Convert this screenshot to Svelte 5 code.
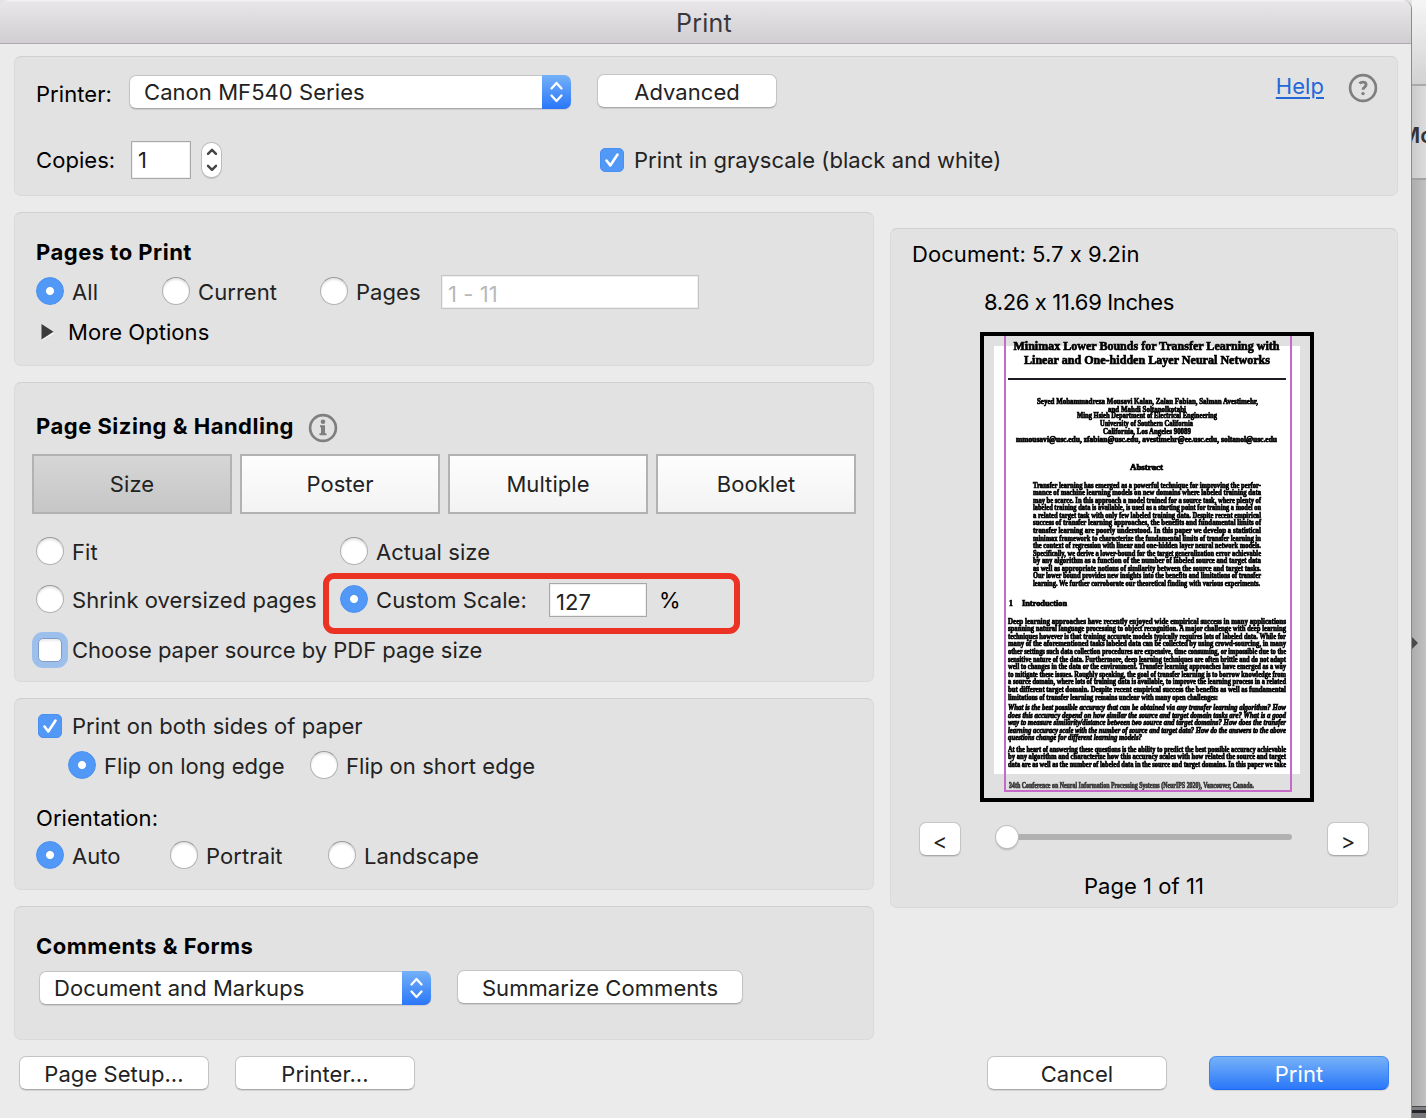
<script>
  let grayscale = $state(true);
  let range = $state('all');
  let scaling = $state('custom');
  let bySize = $state(false);
  let duplex = $state(true);
  let flip = $state('long');
  let orientation = $state('auto');
  let tab = $state('Size');

  const tabs = ['Size', 'Poster', 'Multiple', 'Booklet'];

  // thumbnail lines: x, baseline, width, font size, text
  const title = [
    [29.5, 13.8, 266, 13, 'Minimax Lower Bounds for Transfer Learning with'],
    [40, 27.8, 246, 13, 'Linear and One-hidden Layer Neural Networks']
  ];
  const authors = [
    [53, 67.7, 221, 7.5, 'Seyed Mohammadreza Mousavi Kalan, Zalan Fabian, Salman Avestimehr,'],
    [124, 75.7, 78, 7.5, 'and Mahdi Soltanolkotabi'],
    [93, 82, 140, 7.5, 'Ming Hsieh Department of Electrical Engineering'],
    [116, 89.8, 93, 7.5, 'University of Southern California'],
    [119, 97.8, 88, 7.5, 'California, Los Angeles 90089'],
    [32, 105.5, 261, 7.5, 'mmousavi@usc.edu, zfabian@usc.edu, avestimehr@ee.usc.edu, soltanol@usc.edu'],
    [146, 133.7, 33, 7.5, 'Abstract']
  ];
  const abstract = [
    'Transfer learning has emerged as a powerful technique for improving the perfor-',
    'mance of machine learning models on new domains where labeled training data',
    'may be scarce. In this approach a model trained for a source task, where plenty of',
    'labeled training data is available, is used as a starting point for training a model on',
    'a related target task with only few labeled training data. Despite recent empirical',
    'success of transfer learning approaches, the benefits and fundamental limits of',
    'transfer learning are poorly understood. In this paper we develop a statistical',
    'minimax framework to characterize the fundamental limits of transfer learning in',
    'the context of regression with linear and one-hidden layer neural network models.',
    'Specifically, we derive a lower-bound for the target generalization error achievable',
    'by any algorithm as a function of the number of labeled source and target data',
    'as well as appropriate notions of similarity between the source and target tasks.',
    'Our lower bound provides new insights into the benefits and limitations of transfer',
    'learning. We further corroborate our theoretical finding with various experiments.'
  ];
  const intro = [
    'Deep learning approaches have recently enjoyed wide empirical success in many applications',
    'spanning natural language processing to object recognition. A major challenge with deep learning',
    'techniques however is that training accurate models typically requires lots of labeled data. While for',
    'many of the aforementioned tasks labeled data can be collected by using crowd-sourcing, in many',
    'other settings such data collection procedures are expensive, time consuming, or impossible due to the',
    'sensitive nature of the data. Furthermore, deep learning techniques are often brittle and do not adapt',
    'well to changes in the data or the environment. Transfer learning approaches have emerged as a way',
    'to mitigate these issues. Roughly speaking, the goal of transfer learning is to borrow knowledge from',
    'a source domain, where lots of training data is available, to improve the learning process in a related',
    'but different target domain. Despite recent empirical success the benefits as well as fundamental',
    'limitations of transfer learning remains unclear with many open challenges:'
  ];
  const questions = [
    'What is the best possible accuracy that can be obtained via any transfer learning algorithm? How',
    'does this accuracy depend on how similar the source and target domain tasks are? What is a good',
    'way to measure similarity/distance between two source and target domains? How does the transfer',
    'learning accuracy scale with the number of source and target data? How do the answers to the above',
    'questions change for different learning models?'
  ];
  const closing = [
    'At the heart of answering these questions is the ability to predict the best possible accuracy achievable',
    'by any algorithm and characterize how this accuracy scales with how related the source and target',
    'data are as well as the number of labeled data in the source and target domains. In this paper we take'
  ];
</script>

{#snippet arrows()}
  <span class="arrows">
    <svg width="29" height="34" viewBox="0 0 29 34" fill="none" stroke="#fff" stroke-width="2.3" stroke-linecap="round" stroke-linejoin="round">
      <path d="M9.5 13.5 14.5 8 19.5 13.5" />
      <path d="M9.5 20.5 14.5 26 19.5 20.5" />
    </svg>
  </span>
{/snippet}

{#snippet lines(list, x, y, width, lastWidth)}
  {#each list as line, i}
    <text {x} y={y + i * 7.58} font-size="7.6" textLength={i === list.length - 1 ? lastWidth : width} lengthAdjust="spacingAndGlyphs">{line}</text>
  {/each}
{/snippet}

<div class="screen">
  <div class="dialog">
    <header class="titlebar">Print</header>

    <section class="panel printer">
      <div class="row printer-row">
        <span class="name">Printer:</span>
        <div class="select printer-select">
          <span>Canon MF540 Series</span>
          {@render arrows()}
        </div>
        <button class="btn advanced">Advanced</button>
        <a class="help" href="#help">Help</a>
        <svg class="help-icon" width="30" height="30" viewBox="0 0 30 30">
          <circle cx="15" cy="15" r="12.9" fill="none" stroke="#7f7f7f" stroke-width="2.7" />
          <path d="M11.4 10.6c1-1 2.100-1.500 3.500-1.500 2 0 3.200 1 3.200 2.600 0 2.400-3.100 2.400-3.100 5" fill="none" stroke="#7f7f7f" stroke-width="2.8" />
          <circle cx="15" cy="20.6" r="1.7" fill="#7f7f7f" />
        </svg>
      </div>
      <div class="row copies-row">
        <span class="name">Copies:</span>
        <input class="field copies" value="1" />
        <span class="stepper">
          <svg width="20" height="36" viewBox="0 0 20 36" fill="none" stroke="#444" stroke-width="2.4" stroke-linecap="round" stroke-linejoin="round">
            <path d="M6 11.8 10 7.8 14 11.8" />
            <path d="M6 23.8 10 27.8 14 23.8" />
          </svg>
        </span>
        <label class="option gray-option">
          <input type="checkbox" bind:checked={grayscale} />
          <span>Print in grayscale (black and white)</span>
        </label>
      </div>
    </section>

    <div class="columns">
      <div class="left">
        <section class="panel pages">
          <h2>Pages to Print</h2>
          <div class="row range-row">
            <label class="option w-all"><input type="radio" value="all" bind:group={range} /><span>All</span></label>
            <label class="option w-current"><input type="radio" value="current" bind:group={range} /><span>Current</span></label>
            <label class="option w-pages"><input type="radio" value="pages" bind:group={range} /><span>Pages</span></label>
            <input class="field range" placeholder="1 - 11" />
          </div>
          <div class="row more">
            <svg width="14" height="18" viewBox="0 0 14 18">
              <path d="M1 2.5v15l12-7z" fill="#fff" opacity=".7" />
              <path d="M.5 1v15.500l12-7.700z" fill="#3c3c3c" />
            </svg>
            <span>More Options</span>
          </div>
        </section>

        <section class="panel sizing">
          <div class="row sizing-head">
            <h2>Page Sizing &amp; Handling</h2>
            <svg width="30" height="30" viewBox="0 0 30 30">
              <circle cx="15" cy="15" r="12.9" fill="none" stroke="#7f7f7f" stroke-width="2.7" />
              <circle cx="15" cy="8.800" r="2.300" fill="#7f7f7f" />
              <path d="M12 12.300h5v8h1.500v2h-7v-2h1.500v-6h-1z" fill="#7f7f7f" />
            </svg>
          </div>
          <div class="tabs">
            {#each tabs as name}
              <button class:active={tab === name} onclick={() => (tab = name)}>{name}</button>
            {/each}
          </div>
          <div class="scaling">
            <label class="option"><input type="radio" value="fit" bind:group={scaling} /><span>Fit</span></label>
            <label class="option"><input type="radio" value="actual" bind:group={scaling} /><span>Actual size</span></label>
            <label class="option"><input type="radio" value="shrink" bind:group={scaling} /><span>Shrink oversized pages</span></label>
            <div class="row">
              <label class="option w-custom"><input type="radio" value="custom" bind:group={scaling} /><span>Custom Scale:</span></label>
              <input class="field scale" value="127" />
              <span class="percent">%</span>
            </div>
          </div>
          <label class="option source">
            <input class="focused" type="checkbox" bind:checked={bySize} />
            <span>Choose paper source by PDF page size</span>
          </label>
          <div class="highlight"></div>
        </section>

        <section class="panel sides">
          <label class="option duplex">
            <input type="checkbox" bind:checked={duplex} />
            <span>Print on both sides of paper</span>
          </label>
          <div class="row flip-row">
            <label class="option w-long"><input type="radio" value="long" bind:group={flip} /><span>Flip on long edge</span></label>
            <label class="option"><input type="radio" value="short" bind:group={flip} /><span>Flip on short edge</span></label>
          </div>
          <div class="row orientation">Orientation:</div>
          <div class="row orient-row">
            <label class="option w-auto"><input type="radio" value="auto" bind:group={orientation} /><span>Auto</span></label>
            <label class="option w-portrait"><input type="radio" value="portrait" bind:group={orientation} /><span>Portrait</span></label>
            <label class="option"><input type="radio" value="landscape" bind:group={orientation} /><span>Landscape</span></label>
          </div>
        </section>

        <section class="panel comments">
          <h2>Comments &amp; Forms</h2>
          <div class="row comments-row">
            <div class="select comments-select">
              <span>Document and Markups</span>
              {@render arrows()}
            </div>
            <button class="btn summarize">Summarize Comments</button>
          </div>
        </section>
      </div>

      <section class="panel preview">
        <div class="doc-size">Document: 5.7 x 9.2in</div>
        <div class="paper-size">8.26 x 11.69 Inches</div>
        <div class="page">
          <svg width="326" height="462" viewBox="0 0 326 462">
            <rect width="326" height="462" fill="#e0e0e0" />
            <rect x="10" y="10" width="306" height="428" fill="#fff" />
            <g class="ink">
              {#each title as [x, y, w, size, line]}
                <text {x} {y} font-size={size} textLength={w} lengthAdjust="spacingAndGlyphs">{line}</text>
              {/each}
              {#each authors as [x, y, w, size, line]}
                <text {x} {y} font-size={size} textLength={w} lengthAdjust="spacingAndGlyphs">{line}</text>
              {/each}
              {@render lines(abstract, 49, 151.5, 228, 227)}
              <text x="25" y="269.500" font-size="7.600">1</text>
              <text x="38" y="269.500" font-size="7.600" textLength="45" lengthAdjust="spacingAndGlyphs">Introduction</text>
              {@render lines(intro, 24, 287.7, 278, 210)}
              <g font-style="italic">{@render lines(questions, 24, 374, 278, 134)}</g>
              {@render lines(closing, 24, 415.8, 278, 278)}
              <text x="25" y="452" font-size="7.600" textLength="245" lengthAdjust="spacingAndGlyphs" opacity=".75">34th Conference on Neural Information Processing Systems (NeurIPS 2020), Vancouver, Canada.</text>
            </g>
            <rect x="24" y="42" width="278" height="2" fill="#1c1c22" />
            <path d="M21 0V455H307V0" fill="none" stroke="#c56ac8" stroke-width="2" />
          </svg>
        </div>
        <div class="row pager">
          <button class="btn step">&lt;</button>
          <div class="slider"><span class="knob"></span></div>
          <button class="btn step">&gt;</button>
        </div>
        <div class="page-no">Page 1 of 11</div>
      </section>
    </div>

    <footer class="row footer">
      <button class="btn setup">Page Setup...</button>
      <button class="btn wide">Printer...</button>
      <button class="btn wide cancel">Cancel</button>
      <button class="btn wide primary">Print</button>
    </footer>
  </div>

  <aside class="behind">
    <div class="behind-top"></div>
    <div class="behind-bar"><span>Mo</span></div>
    <div class="behind-body"><i></i></div>
    <div class="behind-dock"></div>
  </aside>
</div>

<style>
  :global(body) {
    margin: 0;
    background: #bebebe;
  }

  .screen {
    display: flex;
    width: 1426px;
    height: 1118px;
    overflow: hidden;
    font-family: Inter, 'Liberation Sans', sans-serif;
    font-size: 22px;
    letter-spacing: 0.06px;
    color: #000;
    background: #e4e4e4;
  }

  .screen * {
    box-sizing: border-box;
  }

  .row {
    display: flex;
    align-items: center;
  }

  .dialog {
    flex: none;
    width: 1412px;
    height: 1130px;
    background: #ebebeb;
    border-right: 1px solid #8c8c8c;
    border-radius: 9px 9px 0 0;
    overflow: hidden;
  }

  .titlebar {
    height: 44px;
    padding-right: 3px;
    border-bottom: 1px solid #acaaac;
    background: linear-gradient(#f6f5f6 0, #e8e6e9 2px, #d0ced1 43px);
    color: #3a383a;
    font-size: 25px;
    letter-spacing: 0.2px;
    line-height: 46px;
    text-align: center;
  }

  .panel {
    background: #e2e2e2;
    border: 1px solid #dadada;
    border-top-color: #d0d0d0;
    border-radius: 7px;
  }

  .printer {
    width: 1384px;
    height: 140px;
    margin: 12px 0 0 14px;
    padding: 17px 19px 0 21px;
  }

  .printer-row {
    height: 36px;
  }

  .copies-row {
    height: 38px;
    margin-top: 31px;
  }

  .name {
    width: 93px;
    margin-top: 4px;
  }

  .copies-row .name {
    width: 95px;
    margin-top: 0;
  }

  .btn {
    height: 34px;
    padding: 1px 0 0;
    border: 1px solid #c4c4c4;
    border-bottom-color: #a9a9a9;
    border-radius: 7px;
    background: #fff;
    box-shadow: 0 1px 1px rgba(0, 0, 0, 0.1);
    color: #222;
    font: inherit;
    letter-spacing: inherit;
  }

  .select {
    display: flex;
    justify-content: space-between;
    align-items: center;
    height: 34px;
    padding-left: 14px;
    border: 1px solid #c4c4c4;
    border-bottom-color: #a9a9a9;
    border-right: 0;
    border-radius: 7px;
    background: #fff;
    box-shadow: 0 1px 1px rgba(0, 0, 0, 0.1);
    color: #222;
  }

  .arrows {
    width: 29px;
    height: 34px;
    border-radius: 0 7px 7px 0;
    background: linear-gradient(#74b1f7, #2a76fa);
  }

  .arrows svg {
    display: block;
  }

  .printer-select {
    width: 442px;
  }

  .advanced {
    width: 180px;
    margin: -2px 0 0 26px;
  }

  .help {
    margin: -13px 0 0 auto;
    color: #2468d8;
    text-decoration-thickness: 2px;
    text-underline-offset: 3px;
  }

  .help-icon {
    margin: -9px 0 0 24px;
  }

  .field {
    border: 1px solid #a8a8a8;
    background: #fff;
    box-shadow: inset 0 0 0 1px #f0f0f0;
    color: #222;
    font: inherit;
    letter-spacing: inherit;
    outline: none;
    border-radius: 0;
  }

  .copies {
    width: 60px;
    height: 38px;
    padding: 0 6px;
  }

  .stepper {
    width: 19px;
    height: 34px;
    margin-left: 11px;
    margin-top: -1px;
    border-radius: 9px;
    background: #fff;
    box-shadow: 0 0 0 1px #bcbcbc, 0 2px 1px rgba(0, 0, 0, 0.15);
  }

  .stepper svg {
    display: block;
    margin: -1px 0 0 -0.5px;
  }

  .gray-option {
    margin-left: 379px;
  }

  .option {
    display: flex;
    align-items: center;
    color: #222;
    white-space: nowrap;
  }

  .option span {
    padding-top: 1px;
  }

  input[type='radio'],
  input[type='checkbox'] {
    appearance: none;
    flex: none;
    margin: 0;
    border: 1px solid #b2b2b2;
    border-top-color: #999;
    background: #fff;
    box-shadow: inset 0 2px 2px rgba(0, 0, 0, 0.1);
  }

  input[type='radio'] {
    width: 28px;
    height: 28px;
    margin-right: 8px;
    border-radius: 50%;
  }

  input[type='checkbox'] {
    width: 24px;
    height: 24px;
    margin: 0 10px 0 2px;
    border-radius: 5px;
  }

  .gray-option input[type='checkbox'] {
    margin-left: 0;
  }

  .gray-option span,
  .duplex span,
  .source span {
    padding: 0;
  }

  input[type='radio']:checked {
    border-color: #4a90f2;
    background: radial-gradient(circle, #fff 3.6px, #5298f7 4.4px);
    box-shadow: none;
  }

  input[type='checkbox']:checked {
    border-color: #4a90f2;
    background: #5298f7 url("data:image/svg+xml,%3Csvg xmlns='http://www.w3.org/2000/svg' viewBox='0 0 22 22'%3E%3Cpath d='M5.500 11.500 9.300 16.500 16.500 5.500' fill='none' stroke='%23fff' stroke-width='2.600' stroke-linecap='round' stroke-linejoin='round'/%3E%3C/svg%3E") center / 22px;
    box-shadow: none;
  }

  input[type='checkbox'].focused {
    border-color: #7f9dc8;
    box-shadow: 0 0 0 6px #9dbfec, inset 0 2px 2px rgba(0, 0, 0, 0.08);
  }

  h2 {
    margin: 0;
    font-size: 22px;
    font-weight: 700;
    letter-spacing: 0.5px;
    line-height: 40px;
  }

  .columns {
    display: flex;
    gap: 16px;
    margin: 16px 0 0 14px;
  }

  .left {
    display: flex;
    flex: none;
    flex-direction: column;
    gap: 16px;
    width: 860px;
  }

  .pages {
    height: 154px;
    padding: 19px 0 0 21px;
  }

  .range-row {
    height: 38px;
  }

  .w-all {
    width: 126px;
  }

  .w-current {
    width: 158px;
  }

  .w-pages {
    width: 121px;
  }

  .range {
    width: 258px;
    height: 34px;
    padding: 4px 6px 0;
    margin-top: 2px;
    border-color: #c4c4c4;
  }

  .range::placeholder {
    color: #b9b9b9;
  }

  .more {
    height: 40px;
    margin-top: 2px;
    padding-left: 5px;
    gap: 13px;
  }

  .sizing {
    position: relative;
    height: 300px;
    padding: 23px 0 0 17px;
  }

  .sizing-head {
    height: 40px;
    padding-left: 4px;
  }

  .sizing-head svg {
    margin: 4px 0 0 14px;
  }

  .tabs {
    display: flex;
    gap: 8px;
    margin-top: 8px;
  }

  .tabs button {
    width: 200px;
    height: 60px;
    border: 2px solid #b2b2b2;
    background: linear-gradient(#fdfdfd, #f3f3f3);
    color: #222;
    font: inherit;
    letter-spacing: inherit;
  }

  .tabs button.active {
    background: linear-gradient(#d6d6d6, #c6c6c6);
  }

  .scaling {
    display: grid;
    grid-template-columns: 304px auto;
    grid-auto-rows: 48px;
    margin: 13px 0 0 4px;
  }

  .w-custom {
    width: 209px;
  }

  .scale {
    width: 98px;
    height: 34px;
    padding: 3px 6px 0;
    margin-top: 2px;
  }

  .percent {
    margin-left: 12px;
    padding-top: 1px;
  }

  .source {
    height: 40px;
    margin: 7px 0 0 4px;
    letter-spacing: -0.02px;
  }

  .source span {
    margin-top: -1px;
  }

  .highlight {
    position: absolute;
    left: 308px;
    top: 190px;
    width: 417px;
    height: 61px;
    border: 6px solid #ec3323;
    border-radius: 11px;
  }

  .sides {
    height: 192px;
    padding: 7px 0 0 21px;
  }

  .duplex {
    height: 40px;
  }

  .duplex span {
    margin-top: -1px;
  }

  .flip-row {
    height: 38px;
    padding-left: 32px;
  }

  .orientation {
    height: 40px;
    margin-top: 14px;
  }

  .orient-row {
    height: 34px;
  }

  .w-long {
    width: 242px;
  }

  .w-auto {
    width: 134px;
  }

  .w-portrait {
    width: 158px;
  }

  .comments {
    height: 134px;
    padding: 19px 0 0 21px;
  }

  .comments-row {
    margin-top: 5px;
    padding-left: 3px;
  }

  .comments-select {
    width: 392px;
  }

  .summarize {
    width: 286px;
    margin: -2px 0 0 26px;
  }

  .preview {
    width: 508px;
    height: 680px;
    flex: none;
    margin-top: 16px;
    line-height: 40px;
  }

  .doc-size {
    margin: 5px 0 0 21px;
  }

  .paper-size {
    margin: 8px 0 0 93px;
    letter-spacing: -0.37px;
  }

  .page {
    width: 334px;
    height: 470px;
    margin: 10px 0 0 89px;
    border: 4px solid #000;
  }

  .page svg {
    display: block;
  }

  .ink {
    fill: #000;
    stroke: #000;
    stroke-width: 0.7px;
    font-family: 'Liberation Serif', serif;
    font-weight: 700;
    letter-spacing: 0;
    filter: blur(0.5px);
  }

  .pager {
    margin: 20px 28px 0;
  }

  .step {
    width: 42px;
    line-height: 20px;
    padding-top: 3px;
  }

  .slider {
    display: flex;
    align-items: center;
    width: 286px;
    height: 6px;
    margin: -5px 35px 0 45px;
    border-radius: 3px;
    background: #b1b1b1;
  }

  .knob {
    width: 22px;
    height: 22px;
    margin-left: -10px;
    border-radius: 50%;
    background: #fff;
    box-shadow: 0 0 0 1px #bdbdbd, 0 2px 2px rgba(0, 0, 0, 0.2);
  }

  .page-no {
    margin-top: 10px;
    text-align: center;
  }

  .footer {
    margin: 16px 0 0 19px;
  }

  .setup {
    width: 190px;
    margin-right: 26px;
  }

  .wide {
    width: 180px;
  }

  .cancel {
    margin: 0 42px 0 auto;
  }

  .primary {
    margin-right: 22px;
    border-color: #4d8ff0 #3a80f4 #1e66f0;
    background: linear-gradient(#76b1f7, #2a78fa);
    color: #fff;
  }

  .behind {
    flex: none;
    width: 14px;
    height: 1118px;
    color: #333;
  }

  .behind-top {
    height: 84px;
    background: linear-gradient(#f6f6f6, #d2d2d2);
  }

  .behind-bar {
    height: 96px;
    border-top: 2px solid #a9a9a9;
    border-bottom: 2px solid #a2a2a2;
    background: linear-gradient(90deg, #cbcbcb, #dcdcdc);
    overflow: hidden;
    line-height: 98px;
  }

  .behind-bar span {
    margin-left: -12px;
    font-weight: 600;
  }

  .behind-body {
    height: 926px;
    padding-top: 457px;
    background: linear-gradient(90deg, #acacac, #c2c2c2);
  }

  .behind-body i {
    display: block;
    width: 0;
    border: 6px solid transparent;
    border-left-color: #4a4a4a;
    border-right: 0;
  }

  .behind-dock {
    height: 12px;
    border-top: 1px solid #4a4a4c;
    background: linear-gradient(#808084 3px, #24242a 3px, #24242a 6px, #77777b 6px);
  }
</style>
